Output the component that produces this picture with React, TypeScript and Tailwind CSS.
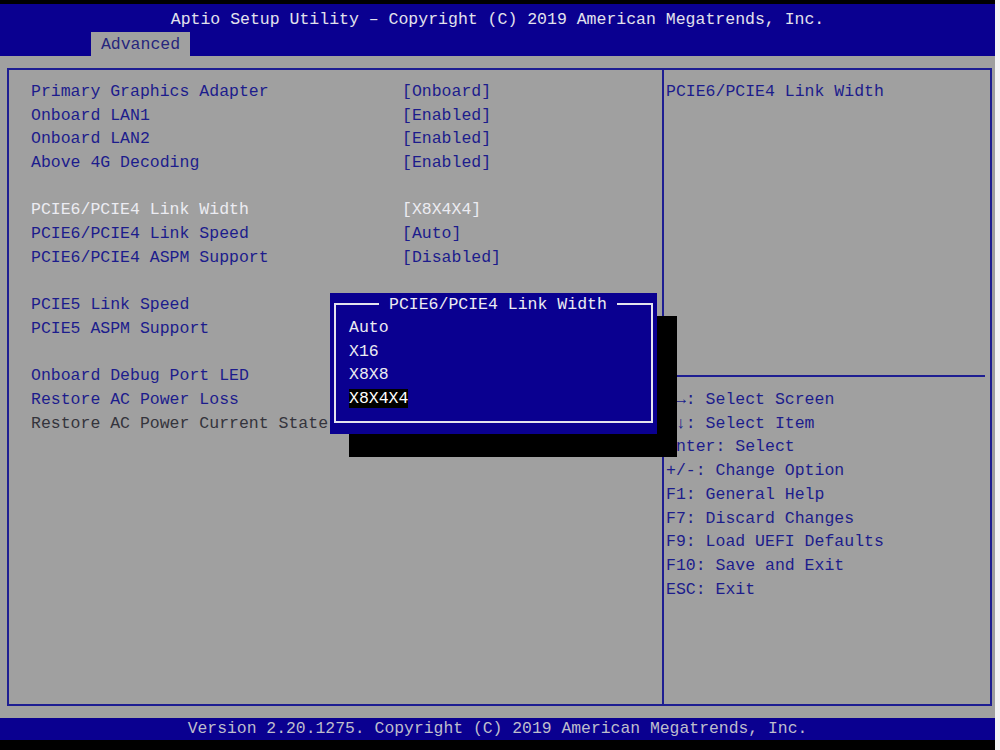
import React from 'react';

const rows: { label: string; value?: string; tone?: 'sel' | 'dim' }[] = [
    { label: 'Primary Graphics Adapter', value: '[Onboard]' },
    { label: 'Onboard LAN1', value: '[Enabled]' },
    { label: 'Onboard LAN2', value: '[Enabled]' },
    { label: 'Above 4G Decoding', value: '[Enabled]' },
    { label: '' },
    { label: 'PCIE6/PCIE4 Link Width', value: '[X8X4X4]', tone: 'sel' },
    { label: 'PCIE6/PCIE4 Link Speed', value: '[Auto]' },
    { label: 'PCIE6/PCIE4 ASPM Support', value: '[Disabled]' },
    { label: '' },
    { label: 'PCIE5 Link Speed' },
    { label: 'PCIE5 ASPM Support' },
    { label: '' },
    { label: 'Onboard Debug Port LED' },
    { label: 'Restore AC Power Loss' },
    { label: 'Restore AC Power Current State', tone: 'dim' },
];

const help = [
    '←→: Select Screen',
    '↑↓: Select Item',
    'Enter: Select',
    '+/-: Change Option',
    'F1: General Help',
    'F7: Discard Changes',
    'F9: Load UEFI Defaults',
    'F10: Save and Exit',
    'ESC: Exit',
];

const options = ['Auto', 'X16', 'X8X8', 'X8X4X4'];

export default function App() {
    return (
        <div className="relative w-[1000px] h-[750px] bg-[#f4f4f4] overflow-hidden font-['Liberation_Mono',monospace] text-[16.5px] whitespace-pre">
            <div className="w-[995px] h-full flex flex-col">
                <div className="h-[4px] bg-black" />

                {/* header */}
                <div className="h-[52px] bg-[#0a0090] flex flex-col">
                    <div className="h-[28px] pt-[3px] leading-[26px] text-center text-[#e2e2ec]">
                        Aptio Setup Utility – Copyright (C) 2019 American Megatrends, Inc.
                    </div>
                    <div className="h-[24px] pl-[91px] flex">
                        <div className="w-[99px] h-full bg-[#a0a0a0] text-[#26267c] leading-[26px] text-center">Advanced</div>
                    </div>
                </div>

                {/* body */}
                <div className="flex-1 bg-[#a0a0a0] pl-[7px] pt-[12px] pr-[3px] pb-[12px]">
                    <div className="h-full border-2 border-[#1e1e92] flex text-[#1c1c8c] leading-[23.7px]">
                        <div className="w-[653px] pl-[22px] pt-[10px]">
                            {rows.map((r, i) => (
                                <div key={i} className="flex h-[23.7px]">
                                    <span className={`w-[371px] ${r.tone === 'sel' ? 'text-[#ececf2]' : r.tone === 'dim' ? 'text-[#34343c]' : ''}`}>
                                        {r.label}
                                    </span>
                                    <span className={r.tone === 'sel' ? 'text-[#ececf2]' : ''}>{r.value ?? ''}</span>
                                </div>
                            ))}
                        </div>
                        <div className="flex-1 border-l-2 border-[#1e1e92] flex flex-col">
                            <div className="h-[305px] pl-[2px] pt-[10px]">PCIE6/PCIE4 Link Width</div>
                            <div className="border-t-2 border-[#1e1e92] mr-[5px]" />
                            <div className="pl-[2px] pt-[11px]">
                                {help.map((h) => (
                                    <div key={h}>{h}</div>
                                ))}
                            </div>
                        </div>
                    </div>
                </div>

                {/* footer */}
                <div className="h-[22px] bg-[#0a0090] text-center text-[#bdbdcc] text-[16.4px] leading-[22px]">
                    Version 2.20.1275. Copyright (C) 2019 American Megatrends, Inc.
                </div>
                <div className="h-[10px] bg-black" />
            </div>

            {/* popup shadow */}
            <div className="absolute left-[349px] top-[316px] w-[328px] h-[141px] bg-black" />

            {/* popup */}
            <div className="absolute left-[330px] top-[293px] w-[327px] h-[141px] bg-[#0a0090] px-[4px] pt-[10px] pb-[11px] text-[#ececf2] leading-[23.7px]">
                <div className="relative h-full border-2 border-[#e4e4ee] pl-[13px] pt-[11px]">
                    <span className="absolute left-[43px] top-[-12px] px-[10px] bg-[#0a0090]">PCIE6/PCIE4 Link Width</span>
                    {options.map((o) => (
                        <div key={o} className="h-[23.7px]">
                            <span className={o === 'X8X4X4' ? 'bg-black text-white' : ''}>{o}</span>
                        </div>
                    ))}
                </div>
            </div>
        </div>
    );
}
